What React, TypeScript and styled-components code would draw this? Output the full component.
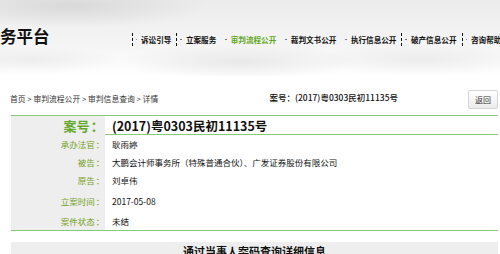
import React from 'react';
import styled, { createGlobalStyle } from 'styled-components';

const GlobalStyle = createGlobalStyle`
    html, body {
        margin: 0;
        padding: 0;
        background: #fff;
        overflow: hidden;
    }
    body {
        font-family: "Noto Sans CJK SC", "Noto Sans", sans-serif;
        color: #111;
    }
`;

const navItems = [
    { title: '诉讼引导', divider: true },
    { title: '立案服务', divider: true },
    { title: '审判流程公开', active: true },
    { title: '裁判文书公开' },
    { title: '执行信息公开' },
    { title: '破产信息公开', divider: true },
    { title: '咨询帮助', divider: true },
];

const rows = [
    { label: '承办法官', value: '耿雨婷', height: 18 },
    { label: '被告', value: '大鹏会计师事务所（特殊普通合伙）、广发证券股份有限公司', height: 18 },
    { label: '原告', value: '刘卓伟', height: 18 },
    { label: '立案时间', value: '2017-05-08', height: 23 },
    { label: '案件状态', value: '未结', height: 18 },
];

const App = () => {
    return (
        <>
            <GlobalStyle />
            <Page lang="zh-CN">
                <Header>
                    <SiteTitle>务平台</SiteTitle>
                    <Nav>
                        {navItems.map((item, index) => (
                            <NavItem key={index} $divider={!!item.divider} $active={!!item.active}>
                                {item.title}
                            </NavItem>
                        ))}
                    </Nav>
                </Header>

                <Bar>
                    <Crumbs>首页 &gt; 审判流程公开 &gt; 审判信息查询 &gt; 详情</Crumbs>
                    <CaseRef>案号：(2017)粤0303民初11135号</CaseRef>
                    <BackButton>返回</BackButton>
                </Bar>

                <Detail>
                    <CaseRow>
                        <CaseLabel>案号<Colon>：</Colon></CaseLabel>
                        <CaseValue>(2017)粤0303民初11135号</CaseValue>
                    </CaseRow>
                    {rows.map((row, index) => (
                        <Row key={index} $height={row.height}>
                            <Label>{row.label}<Colon>：</Colon></Label>
                            <Value>{row.value}</Value>
                        </Row>
                    ))}
                </Detail>

                <Panel>
                    <PanelTitle>通过当事人案码查询详细信息</PanelTitle>
                </Panel>
            </Page>
        </>
    );
};

const Page = styled.div`
    width: 500px;
    height: 254px;
    overflow: hidden;
`

const Header = styled.div`
    display: flex;
    align-items: center;
    height: 76px;
    background:
        radial-gradient(ellipse 140px 22px at 70px 6px, rgba(200, 200, 200, 0.55), transparent),
        radial-gradient(ellipse 120px 18px at 240px 62px, rgba(215, 215, 215, 0.5), transparent),
        radial-gradient(ellipse 110px 16px at 420px 60px, rgba(220, 220, 220, 0.45), transparent),
        radial-gradient(ellipse 90px 14px at 30px 60px, rgba(225, 225, 225, 0.5), transparent),
        linear-gradient(180deg, #ececec 0%, #f5f5f5 60%, #fff 100%);
`

const SiteTitle = styled.div`
    width: 50px;
    margin-top: -3px;
    font-size: 16.5px;
    font-weight: 700;
    line-height: 1;
    color: #111;
    white-space: nowrap;
`

const Nav = styled.div`
    display: flex;
    align-items: center;
    margin-left: 82px;
    margin-top: 3px;
    white-space: nowrap;
`

const NavItem = styled.div<{ $divider: boolean; $active: boolean }>`
    display: flex;
    align-items: center;
    height: 13px;
    padding: 0 5px 0 3px;
    border-left: 1px dashed ${(p) => (p.$divider ? '#111' : 'transparent')};
    font-size: 7.6px;
    font-weight: 700;
    color: ${(p) => (p.$active ? '#62a821' : '#111')};

    &::before {
        content: '';
        width: 1.5px;
        height: 1.5px;
        margin-right: 4px;
        border-radius: 50%;
        background: #666;
    }
`

const Bar = styled.div`
    display: flex;
    align-items: center;
    height: 24px;
    margin: 10px 2px 0 10px;
`

const Crumbs = styled.div`
    flex: 1;
    font-size: 7.8px;
    color: #333;
`

const CaseRef = styled.div`
    margin-right: 70px;
    margin-top: -2px;
    font-size: 8.5px;
    font-weight: 500;
    color: #111;
`

const BackButton = styled.button`
    width: 30px;
    height: 19px;
    margin-top: 3px;
    padding: 0;
    border: 1px solid #d4d4d4;
    border-radius: 2px;
    background: linear-gradient(180deg, #ffffff 0%, #ececec 100%);
    font-family: inherit;
    font-size: 8px;
    color: #333;
`

const Detail = styled.div`
    margin: 5px 2px 0 11px;
    border-top: 1px solid #86c979;
    border-bottom: 1px solid #86c979;
`

const CaseRow = styled.div`
    display: grid;
    grid-template-columns: 94px 1fr;
    height: 18px;
    border-bottom: 1px solid #86c979;
`

const Colon = styled.span`
    display: inline-block;
    width: 1.2em;
    text-align: center;
`

const CaseLabel = styled.div`
    display: flex;
    align-items: center;
    justify-content: flex-end;
    padding-right: 0;
    background: #eeeeee;
    font-size: 13px;
    font-weight: 700;
    color: #64a82c;
`

const CaseValue = styled.div`
    display: flex;
    align-items: center;
    padding-left: 7px;
    font-size: 12.5px;
    font-weight: 700;
    color: #111;
    white-space: nowrap;
`

const Row = styled.div<{ $height: number }>`
    display: grid;
    grid-template-columns: 94px 1fr;
    height: ${(p) => p.$height}px;
    font-size: 8.5px;
`

const Label = styled.div`
    display: flex;
    align-items: center;
    justify-content: flex-end;
    padding-right: 0;
    background: #eeeeee;
    color: #74a022;
`

const Value = styled.div`
    display: flex;
    align-items: center;
    padding-left: 7px;
    color: #111;
    white-space: nowrap;
`

const Panel = styled.div`
    margin: 11px 2px 0 11px;
    height: 40px;
    padding-top: 3px;
    box-sizing: border-box;
    background: #eeeeee;
`

const PanelTitle = styled.div`
    text-align: center;
    font-size: 11px;
    font-weight: 700;
    color: #111;
    line-height: 13px;
`

export default App;
